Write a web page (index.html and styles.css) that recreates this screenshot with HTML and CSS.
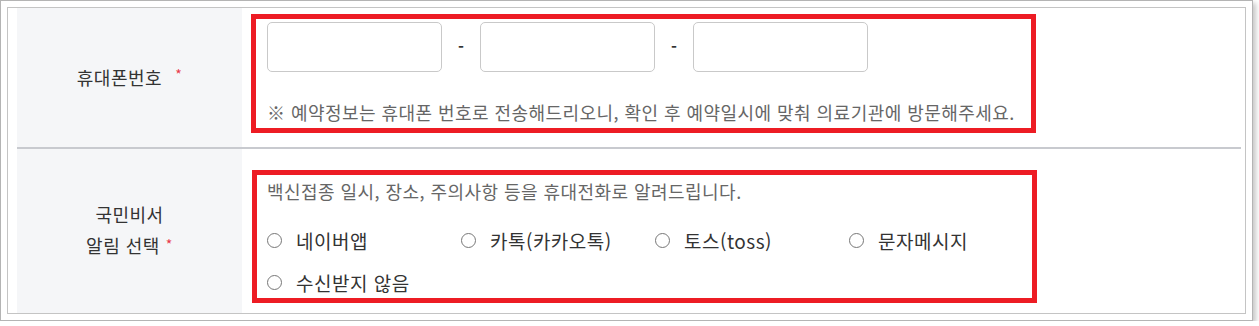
FILE: index.html
```html
<!DOCTYPE html>
<html lang="ko">
<head>
<meta charset="utf-8">
<title>예약 정보</title>
<link rel="stylesheet" href="styles.css">
</head>
<body>
<div class="frame">
  <div class="inner">
    <div class="form">
      <div class="row row-phone">
        <div class="label">휴대폰번호<span class="req req-wide">*</span></div>
        <div class="cell cell-phone">
          <div class="mark">
            <div class="phone">
              <input class="tel" type="text">
              <span class="dash">-</span>
              <input class="tel" type="text">
              <span class="dash">-</span>
              <input class="tel" type="text">
            </div>
            <p class="note">※ 예약정보는 휴대폰 번호로 전송해드리오니, 확인 후 예약일시에 맞춰 의료기관에 방문해주세요.</p>
          </div>
        </div>
      </div>
      <div class="row row-notify">
        <div class="label label-two">
          <span>국민비서</span>
          <span>알림 선택<span class="req">*</span></span>
        </div>
        <div class="cell cell-notify">
          <div class="mark">
            <p class="desc">백신접종 일시, 장소, 주의사항 등을 휴대전화로 알려드립니다.</p>
            <div class="options">
              <label class="opt"><input type="radio" name="n"><span>네이버앱</span></label>
              <label class="opt"><input type="radio" name="n"><span>카톡(카카오톡)</span></label>
              <label class="opt"><input type="radio" name="n"><span>토스(toss)</span></label>
              <label class="opt"><input type="radio" name="n"><span>문자메시지</span></label>
              <label class="opt"><input type="radio" name="n"><span>수신받지 않음</span></label>
            </div>
          </div>
        </div>
      </div>
    </div>
  </div>
</div>
</body>
</html>
```
FILE: styles.css
```css
* { box-sizing: border-box; }
html, body { margin: 0; padding: 0; background: #fff; }
body {
  font-family: "Noto Sans CJK KR", "Noto Sans", sans-serif;
  color: #333;
}
.frame {
  width: 1253px;
  height: 321px;
  border: 1px solid #b4b4b4;
  padding: 6px;
  box-shadow: 3px 3px 5px rgba(0, 0, 0, 0.22);
  background: #fff;
}
.inner {
  height: 307px;
  border: 1px solid #c4c4c4;
  padding: 0 4px 0 9px;
}
.form { display: flex; flex-direction: column; }
.row {
  display: grid;
  grid-template-columns: 225px 1fr;
}
.row-phone { height: 141px; border-bottom: 2px solid #c8cacf; }
.row-notify { height: 164px; }
.label {
  background: #f5f6f8;
  display: flex;
  align-items: center;
  justify-content: center;
  font-size: 18px;
  letter-spacing: 0.5px;
  color: #333;
  padding-bottom: 2px;
}
.label-two {
  flex-direction: column;
  line-height: 31px;
  padding-bottom: 0;
}
.req {
  color: #e8394b;
  font-size: 14px;
  margin-left: 6px;
  position: relative;
  top: -3px;
}
.req-wide { margin-left: 13px; }
.cell-phone { padding: 6px 0 0 9px; }
.cell-notify { padding: 21px 0 0 10px; }
.mark {
  width: 785px;
  border: 5px solid #ed1c24;
}
.cell-phone .mark { padding: 3px 0 4px 11px; }
.cell-notify .mark { padding: 4px 0 4px 10px; }
.phone { display: flex; align-items: center; height: 50px; }
.tel {
  width: 175px;
  height: 50px;
  border: 1px solid #c9c9c9;
  border-radius: 5px;
  background: #fff;
  margin: 0;
  padding: 0 10px;
}
.dash {
  width: 38px;
  text-align: center;
  font-size: 16px;
  font-weight: 700;
  color: #333;
  padding-bottom: 2px;
}
.note, .desc {
  margin: 0;
  font-size: 18px;
  letter-spacing: 0.45px;
  line-height: 24px;
  color: #666;
}
.note { margin-top: 28px; }
.options {
  margin-top: 25px;
  display: grid;
  grid-template-columns: 194px 194px 194px auto;
  row-gap: 18px;
}
.opt {
  display: flex;
  align-items: center;
  height: 24px;
  font-size: 19px;
  letter-spacing: 0.5px;
  color: #333;
  white-space: nowrap;
}
.opt input {
  appearance: none;
  -webkit-appearance: none;
  width: 15px;
  height: 15px;
  margin: 0 14px 0 0;
  border: 1.5px solid #777;
  border-radius: 50%;
  background: #fff;
  flex: none;
}
```
